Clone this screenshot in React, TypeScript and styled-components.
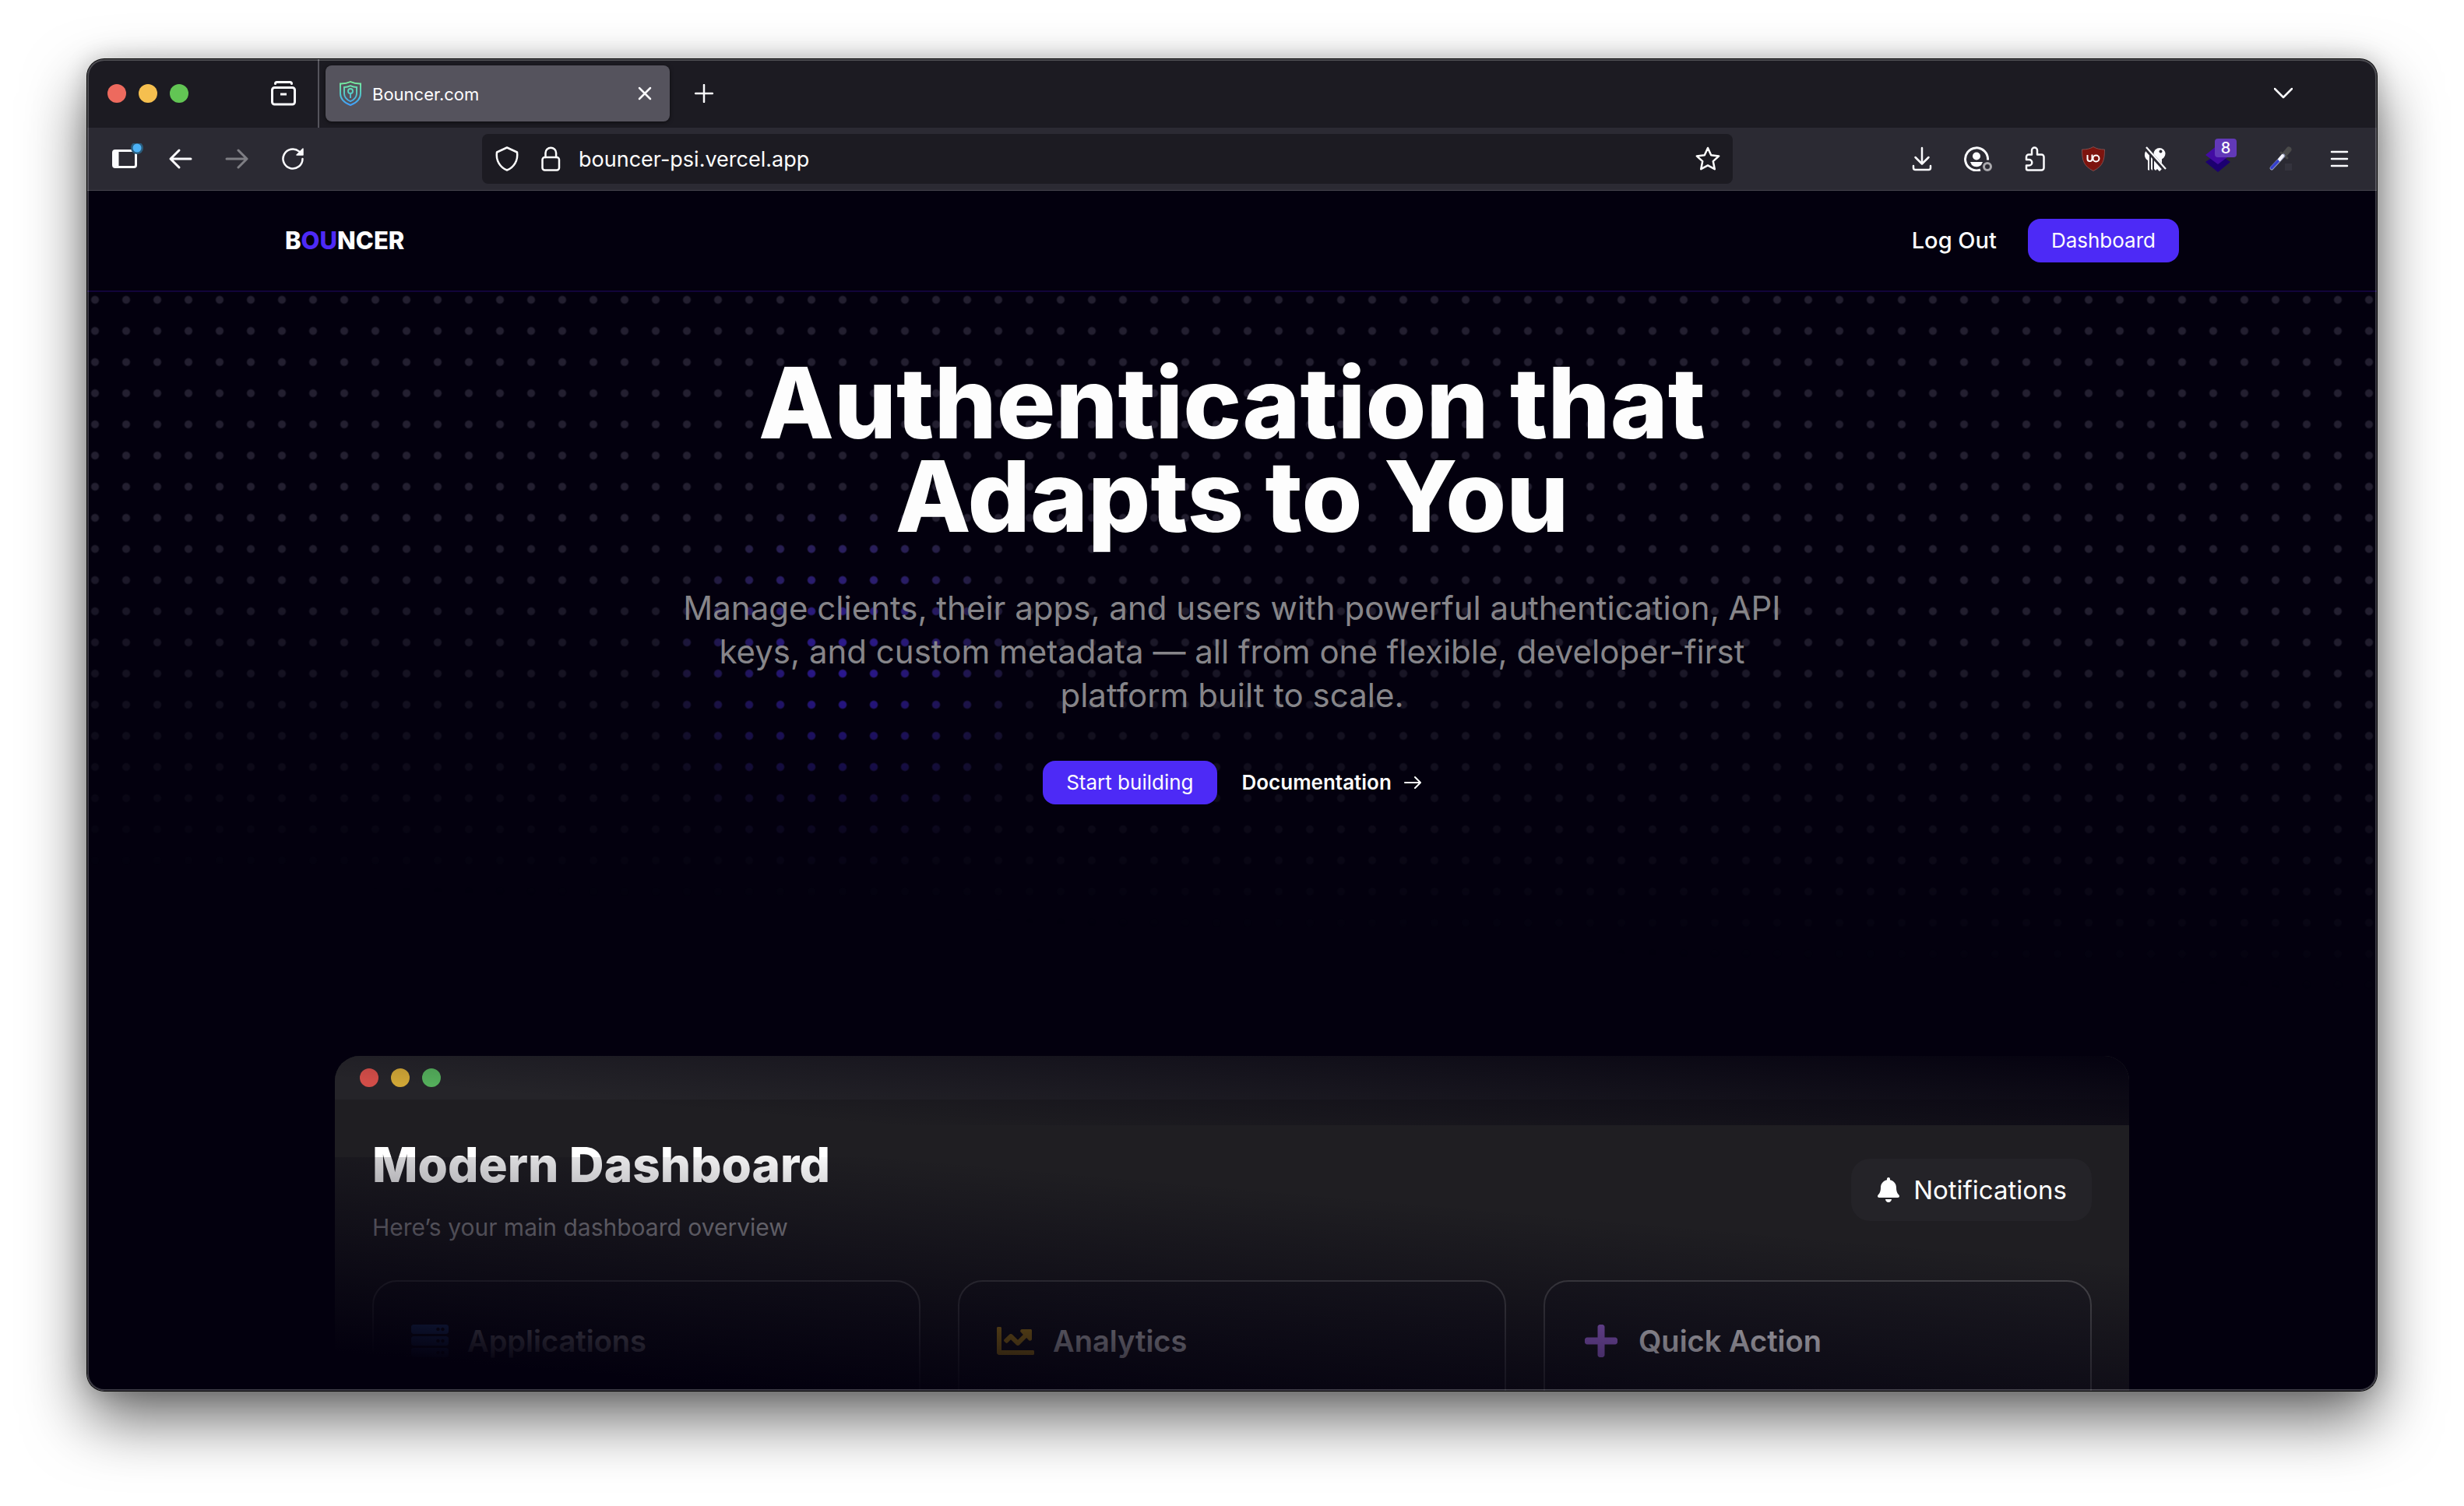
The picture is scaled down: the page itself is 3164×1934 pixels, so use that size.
import React from "react";
import styled, { createGlobalStyle, css } from "styled-components";
import { FaBell, FaChartLine, FaPlus, FaServer } from "react-icons/fa";

const ink = "#03000e";
const primary = "#4d2af6";
const sans = `Inter, "Open Sans", sans-serif`;

const GlobalStyle = createGlobalStyle`
  *, *::before, *::after { box-sizing: border-box; }
  body { margin: 0; background: #fff; font-family: ${sans}; color: #fdfdfd; }
  h1, h2, h3, p { margin: 0; }
  a { color: inherit; text-decoration: none; }
  button, input { font: inherit; color: inherit; }
  svg { display: block; flex: none; }
`;

const Desktop = styled.div`
  display: flex;
  height: 100vh;
  padding: 76px 112px 148px;
`;

const BrowserWindow = styled.div`
  position: relative;
  flex: 1;
  min-width: 0;
  display: flex;
  flex-direction: column;
  border-radius: 22px;
  overflow: hidden;
  background: ${ink};
`;

const WindowShadow = styled.div`
  flex: 1;
  min-width: 0;
  display: flex;
  border-radius: 22px;
  box-shadow: 0 0 0 1px #000, 0 36px 80px rgba(0, 0, 0, 0.6), 0 0 30px rgba(0, 0, 0, 0.2);
`;

const WindowEdge = styled.div`
  position: absolute;
  inset: 0;
  border-radius: 22px;
  box-shadow: inset 0 0 0 2px rgba(255, 255, 255, 0.22);
  pointer-events: none;
`;

const TabStrip = styled.div`
  flex: none;
  display: flex;
  align-items: center;
  height: 88px;
  padding: 0 84px 0 26px;
  background: #1c1b22;
`;

const Lights = styled.div<{ $gap: number }>`
  display: flex;
  gap: ${(p) => p.$gap}px;
`;

const Light = styled.span<{ $color: string }>`
  width: 24px;
  height: 24px;
  border-radius: 50%;
  background: ${(p) => p.$color};
`;

const IconButton = styled.button<{ $width?: number; $dim?: boolean }>`
  position: relative;
  flex: none;
  display: flex;
  align-items: center;
  justify-content: center;
  width: ${(p) => p.$width ?? 72}px;
  height: 64px;
  padding: 0;
  border: 0;
  background: none;
  color: #fbfbfe;
  opacity: ${(p) => (p.$dim ? 0.4 : 1)};
`;

const ViewGroup = styled.div`
  display: flex;
  align-items: center;
  justify-content: flex-end;
  width: 168px;
  height: 88px;
  padding-right: 8px;
  border-right: 2px solid #55545c;
`;

const Tab = styled.div`
  display: flex;
  align-items: center;
  width: 442px;
  height: 72px;
  margin: 0 8px;
  padding: 0 0 0 18px;
  border-radius: 8px;
  background: #55535d;
  box-shadow: 0 1px 5px rgba(0, 0, 0, 0.6);
`;

const TabTitle = styled.span`
  flex: 1;
  margin-left: 14px;
  padding-top: 2px;
  font-size: 22px;
  line-height: 32px;
`;

const Spacer = styled.div`
  flex: 1;
`;

const Toolbar = styled.div`
  flex: none;
  display: flex;
  align-items: center;
  height: 81px;
  padding: 0 12px;
  border-bottom: 1px solid #45444c;
  background: #2b2a33;
`;

const AddressBar = styled.label`
  flex: 1;
  display: flex;
  align-items: center;
  height: 64px;
  margin: 0 207px;
  padding: 0 16px;
  border-radius: 8px;
  background: #1c1b22;
`;

const AddressIcons = styled.span`
  display: flex;
  gap: 24px;
  margin-right: 20px;
`;

const AddressInput = styled.input`
  flex: 1;
  min-width: 0;
  padding: 2px 0 0;
  border: 0;
  outline: 0;
  background: none;
  font-size: 27px;
  line-height: 40px;
`;

const Badge = styled.span`
  position: absolute;
  top: 6px;
  left: 36px;
  width: 28px;
  height: 24px;
  border-radius: 4px;
  background: #6239b8;
  font-size: 20px;
  font-weight: 500;
  line-height: 24px;
  text-align: center;
`;

const Page = styled.div`
  flex: 1;
  min-height: 0;
  overflow: hidden;
`;

const SiteHeader = styled.header`
  height: 130px;
  border-bottom: 2px solid #12043a;
`;

const HeaderInner = styled.div`
  display: flex;
  align-items: center;
  justify-content: space-between;
  max-width: 2432px;
  height: 128px;
  margin: 0 auto;
`;

const Logo = styled.a`
  font-size: 31px;
  font-weight: 800;
  line-height: 48px;

  span { color: ${primary}; }
`;

const HeaderNav = styled.nav`
  display: flex;
  align-items: center;
  gap: 40px;
`;

const NavLink = styled.a`
  font-size: 29px;
  font-weight: 500;
  line-height: 40px;
`;

const PrimaryLink = styled.a`
  display: flex;
  align-items: center;
  height: 56px;
  padding: 0 30px;
  border-radius: 16px;
  background: ${primary};
  font-size: 26px;
  line-height: 32px;
`;

const Hero = styled.main`
  position: relative;
  padding-top: 82px;
`;

const dots = (color: string) => css`
  background-image: radial-gradient(circle at 10px 10px, ${color} 4px, transparent 6px);
  background-size: 40px 40px;
`;

const DotField = styled.div`
  position: absolute;
  inset: 0 0 auto;
  height: 1000px;
  ${dots("#231f30")}
  mask-image: linear-gradient(183deg, #000 420px, transparent 900px);
`;

const DotGlow = styled.div`
  height: 100%;
  ${dots("#4023d8")}
  mask-image: radial-gradient(circle 250px at 33% 515px, #000 10%, transparent 100%);
`;

const HeroCopy = styled.section`
  position: relative;
  display: flex;
  flex-direction: column;
  align-items: center;
  gap: 56px;
  text-align: center;
`;

const Headline = styled.h1`
  font-size: 126px;
  font-weight: 800;
  line-height: 120px;
`;

const Lead = styled.p`
  font-size: 42px;
  line-height: 56px;
  color: #868589;
`;

const Actions = styled.div`
  display: flex;
  align-items: center;
  gap: 32px;
`;

const TextLink = styled.a`
  display: flex;
  align-items: center;
  gap: 16px;
  font-size: 26px;
  font-weight: 600;
  line-height: 32px;
`;

const Preview = styled.section`
  position: relative;
  max-width: 2304px;
  margin: 323px auto 0;
  border-radius: 32px 32px 0 0;
  overflow: hidden;
  background: #1f1e22;
`;

const PreviewBar = styled.div`
  display: flex;
  align-items: center;
  height: 56px;
  padding: 0 32px;
  background: #252429;
`;

const PreviewBody = styled.div`
  padding: 48px;
`;

const PreviewHeader = styled.div`
  display: flex;
  align-items: center;
  justify-content: space-between;
  margin-bottom: 48px;
`;

const PreviewTitle = styled.h2`
  font-size: 62px;
  font-weight: 800;
  line-height: 72px;
  color: #fff;
`;

const PreviewText = styled.p`
  margin-top: 24px;
  font-size: 30px;
  line-height: 40px;
  color: #908f94;
`;

const Notifications = styled.button`
  display: flex;
  align-items: center;
  gap: 16px;
  height: 80px;
  padding: 0 32px;
  border: 0;
  border-radius: 24px;
  background: #242328;
  font-size: 33px;
  line-height: 48px;
  color: #fff;
`;

const CardGrid = styled.div`
  display: grid;
  grid-template-columns: repeat(3, 1fr);
  gap: 48px;
`;

const Card = styled.article`
  height: 320px;
  padding: 48px;
  border: 2px solid #48474b;
  border-radius: 32px;
  background: rgba(12, 6, 36, 0.12);
`;

const CardHeading = styled.div<{ $color: string }>`
  display: flex;
  align-items: center;
  gap: 24px;
  height: 56px;

  svg { width: 48px; color: ${(p) => p.$color}; }
`;

const CardTitle = styled.h3`
  font-size: 38px;
  font-weight: 600;
  line-height: 56px;
  color: #e6e4e8;
`;

const TopShade = styled.div`
  position: absolute;
  inset: 0 0 auto;
  height: 89px;
  background: linear-gradient(5deg, rgba(3, 0, 14, 0) 60px, ${ink} 300px);
  pointer-events: none;
`;

const BottomShade = styled.div`
  position: absolute;
  inset: 130px 0 0;
  background: linear-gradient(185deg, rgba(3, 0, 14, 0) 136px, ${ink} 450px);
  pointer-events: none;
`;

const Stroke = ({ size = 32, width = 2.5, children }: { size?: number; width?: number; children: React.ReactNode }) => (
  <svg
    width={size}
    height={size}
    viewBox={`0 0 ${size} ${size}`}
    fill="none"
    stroke="currentColor"
    strokeWidth={width}
    strokeLinecap="round"
    strokeLinejoin="round"
    aria-hidden="true"
  >
    {children}
  </svg>
);

const Favicon = () => (
  <svg width="28" height="32" viewBox="0 0 28 32" fill="none" stroke="url(#fav)" strokeWidth="1.9" aria-hidden="true">
    <defs>
      <linearGradient id="fav" x1="0" y1="0" x2="0" y2="32" gradientUnits="userSpaceOnUse">
        <stop offset="0" stopColor="#7df59a" />
        <stop offset="0.5" stopColor="#55cbc8" />
        <stop offset="1" stopColor="#3f9bff" />
      </linearGradient>
    </defs>
    <path d="M1 3.500C6 3.700 10 2.800 14 1c4 1.800 8 2.700 13 2.500V16c0 7-5 12-13 15C6 28 1 23 1 16Z" />
    <path d="M6 8c3 0 5.500-.600 8-1.800C16.500 7.400 19 8 22 8v8c0 5-3 8-8 10.200C9 24 6 21 6 16Z" />
    <circle cx="14" cy="13" r="3" />
    <path d="M14 16v6" />
  </svg>
);

const cards = [
  { title: "Applications", color: "#3f74d4", icon: <FaServer size={48} /> },
  { title: "Analytics", color: "#d9a521", icon: <FaChartLine size={48} /> },
  { title: "Quick Action", color: "#a36be0", icon: <FaPlus size={48} /> },
];

export default function App() {
  return (
    <>
      <GlobalStyle />
      <Desktop>
        <WindowShadow>
          <BrowserWindow>
            <TabStrip>
              <Lights $gap={16}>
                <Light $color="#ed6a5e" />
                <Light $color="#f5bf4f" />
                <Light $color="#62c554" />
              </Lights>
              <ViewGroup>
                <IconButton aria-label="Firefox View">
                  <Stroke width={3}>
                    <path d="M5.500 3.500c0-1.500 1-2 2-2h17c1 0 2 .500 2 2" />
                    <rect x="1.500" y="8.500" width="29" height="21.500" rx="3" />
                    <path d="M12 17h8" strokeLinecap="butt" />
                  </Stroke>
                </IconButton>
              </ViewGroup>
              <Tab>
                <Favicon />
                <TabTitle>Bouncer.com</TabTitle>
                <IconButton $width={64} aria-label="Close tab">
                  <Stroke size={18}><path d="M2 2l14 14M16 2L2 16" /></Stroke>
                </IconButton>
              </Tab>
              <IconButton aria-label="New tab">
                <Stroke size={24}><path d="M12 1v22M1 12h22" /></Stroke>
              </IconButton>
              <Spacer />
              <IconButton aria-label="List all tabs">
                <Stroke size={24}><path d="M1 6l11 11L23 6" /></Stroke>
              </IconButton>
            </TabStrip>

            <Toolbar>
              <IconButton aria-label="Sidebar">
                <svg width="48" height="40" viewBox="0 0 48 40" fill="none" aria-hidden="true">
                  <rect x="9.500" y="9.500" width="29" height="21" rx="2.500" stroke="#fbfbfe" strokeWidth="3" />
                  <path d="M10 10h6v20h-6z" fill="#fbfbfe" stroke="#fbfbfe" />
                  <circle cx="40" cy="6" r="8" fill="#2a5c7c" />
                  <circle cx="40" cy="6" r="5.500" fill="#4cb1f5" />
                </svg>
              </IconButton>
              <IconButton aria-label="Back">
                <Stroke width={3}><path d="M29 16H3M14 5L3 16l11 11" /></Stroke>
              </IconButton>
              <IconButton aria-label="Forward" $dim>
                <Stroke width={3}><path d="M3 16h26M18 5l11 11-11 11" /></Stroke>
              </IconButton>
              <IconButton aria-label="Reload">
                <Stroke>
                  <path d="M28.500 16A12.500 12.500 0 1 1 24 6.400" />
                  <path d="M29 3v8h-8z" fill="currentColor" strokeWidth="1.500" />
                </Stroke>
              </IconButton>

              <AddressBar>
                <AddressIcons>
                  <Stroke>
                    <path d="M16 1.500L29 7.500C30.500 18 25 27 16 30.500 7 27 1.500 18 3 7.500Z" />
                  </Stroke>
                  <Stroke>
                    <rect x="5.500" y="14" width="21.500" height="16.500" rx="3" />
                    <path d="M9.500 14V8.500a6.800 6.800 0 0 1 13.600 0V14" />
                  </Stroke>
                </AddressIcons>
                <AddressInput aria-label="Address" defaultValue="bouncer-psi.vercel.app" />
                <Stroke>
                  <path d="M16 2l4.200 9.200 10 1.200-7.400 6.800 2 10L16 24.400l-8.800 4.800 2-10L1.800 12.400l10-1.200Z" />
                </Stroke>
              </AddressBar>

              <IconButton aria-label="Downloads">
                <Stroke>
                  <path d="M16 2v20M7.500 14l8.500 8.500L24.500 14M5 25v2.500a2.500 2.500 0 0 0 2.500 2.500h17a2.500 2.500 0 0 0 2.500-2.500V25" />
                </Stroke>
              </IconButton>
              <IconButton aria-label="Account">
                <svg width="36" height="32" viewBox="0 0 36 32" fill="none" aria-hidden="true">
                  <path d="M21 30A14.500 14.500 0 1 1 30.500 17.500" stroke="#fbfbfe" strokeWidth="3" />
                  <circle cx="16" cy="12.500" r="5" fill="#fbfbfe" />
                  <path d="M8 20h16l-2 4a9 9 0 0 1-12 0z" fill="#fbfbfe" />
                  <circle cx="30" cy="26" r="4.500" stroke="#aaa9ad" strokeWidth="3" />
                </svg>
              </IconButton>
              <IconButton aria-label="Extensions">
                <Stroke>
                  <path d="M6 17V13.500a3 3 0 0 1 3-3h4V5a3.500 3.500 0 0 1 7 0v5.500h5.500a3 3 0 0 1 3 3V27.500a3 3 0 0 1-3 3H8a2 2 0 0 1-2-2V24.500h3.500a3.700 3.700 0 0 0 0-7.500Z" />
                </Stroke>
              </IconButton>
              <IconButton $width={80} aria-label="uBlock Origin">
                <svg width="30" height="32" viewBox="0 0 30 32" aria-hidden="true">
                  <path d="M15 .500C19 3 24 4 29.500 4c0 14-2 21-14.500 27.500C2.500 25 .500 18 .500 4 6 4 11 3 15 .500Z" fill="#7d140e" stroke="#8a5a5a" strokeWidth=".8" />
                  <path d="M7.500 11v5a3 3 0 0 0 6 0v-5M13.500 10.500v5" stroke="#fff" strokeWidth="2" fill="none" />
                  <circle cx="18.500" cy="15.500" r="4" stroke="#fff" strokeWidth="2" fill="none" />
                </svg>
              </IconButton>
              <IconButton $width={80} aria-label="Privacy keys">
                <svg width="32" height="32" viewBox="0 0 32 32" fill="#fbfbfe" aria-hidden="true">
                  <path d="M4 5c-3 4-3 10 2 13v12l2 1V9Z" />
                  <path d="M10 10v19l2 2V11Z" />
                  <circle cx="21" cy="9.500" r="7.500" />
                  <path d="M14 14h10v15l-3 3-3-3-2 2-2-2Z" />
                  <circle cx="22.500" cy="6.500" r="2" fill="#2b2a33" />
                  <path d="M2 1l26 29" stroke="#2b2a33" strokeWidth="5" />
                  <path d="M4 1l25 28" stroke="#fbfbfe" strokeWidth="2.200" />
                </svg>
              </IconButton>
              <IconButton $width={80} aria-label="Layers extension, 8 items">
                <svg width="34" height="34" viewBox="0 0 34 34" aria-hidden="true">
                  <path d="M17 10l16 11-16 13L1 21Z" fill="#1c0070" />
                  <path d="M17-1l16 13-16 12L1 12Z" fill="#430ba3" />
                </svg>
                <Badge>8</Badge>
              </IconButton>
              <IconButton $width={80} aria-label="Color picker">
                <svg width="32" height="32" viewBox="0 0 32 32" fill="none" strokeLinecap="round" aria-hidden="true">
                  <path d="M22 10l5-6" stroke="#4a4a4a" strokeWidth="7" />
                  <path d="M17 8l8 7" stroke="#444" strokeWidth="3" />
                  <path d="M20 12L5 28" stroke="#8e95b5" strokeWidth="5" />
                  <path d="M19 12l-4 5" stroke="#f5f5fa" strokeWidth="4" />
                  <path d="M13 19l-8 8.500" stroke="#3640cc" strokeWidth="3.500" />
                  <path d="M22 22h9v9h-9z" fill="#34333d" />
                </svg>
              </IconButton>
              <IconButton aria-label="Menu">
                <Stroke size={24}><path d="M2 3h20M2 12h20M2 21h20" /></Stroke>
              </IconButton>
            </Toolbar>

            <Page>
              <SiteHeader>
                <HeaderInner>
                  <Logo href="#home">B<span>OU</span>NCER</Logo>
                  <HeaderNav>
                    <NavLink href="#logout">Log Out</NavLink>
                    <PrimaryLink href="#dashboard">Dashboard</PrimaryLink>
                  </HeaderNav>
                </HeaderInner>
              </SiteHeader>

              <Hero>
                <DotField><DotGlow /></DotField>
                <HeroCopy>
                  <Headline>Authentication that<br />Adapts to You</Headline>
                  <Lead>
                    Manage clients, their apps, and users with powerful authentication, API<br />
                    keys, and custom metadata — all from one flexible, developer-first<br />
                    platform built to scale.
                  </Lead>
                  <Actions>
                    <PrimaryLink href="#start">Start building</PrimaryLink>
                    <TextLink href="#docs">
                      Documentation
                      <Stroke size={22} width={2}><path d="M1 11h19M14 4l7 7-7 7" /></Stroke>
                    </TextLink>
                  </Actions>
                </HeroCopy>

                <Preview>
                  <PreviewBar>
                    <Lights $gap={16}>
                      <Light $color="#d14d48" />
                      <Light $color="#d0a636" />
                      <Light $color="#55b05c" />
                    </Lights>
                  </PreviewBar>
                  <PreviewBody>
                    <PreviewHeader>
                      <div>
                        <PreviewTitle>Modern Dashboard</PreviewTitle>
                        <PreviewText>Here’s your main dashboard overview</PreviewText>
                      </div>
                      <Notifications>
                        <FaBell size={32} />
                        Notifications
                      </Notifications>
                    </PreviewHeader>
                    <CardGrid>
                      {cards.map((card) => (
                        <Card key={card.title}>
                          <CardHeading $color={card.color}>
                            {card.icon}
                            <CardTitle>{card.title}</CardTitle>
                          </CardHeading>
                        </Card>
                      ))}
                    </CardGrid>
                  </PreviewBody>
                  <TopShade />
                  <BottomShade />
                </Preview>
              </Hero>
            </Page>
            <WindowEdge />
          </BrowserWindow>
        </WindowShadow>
      </Desktop>
    </>
  );
}
